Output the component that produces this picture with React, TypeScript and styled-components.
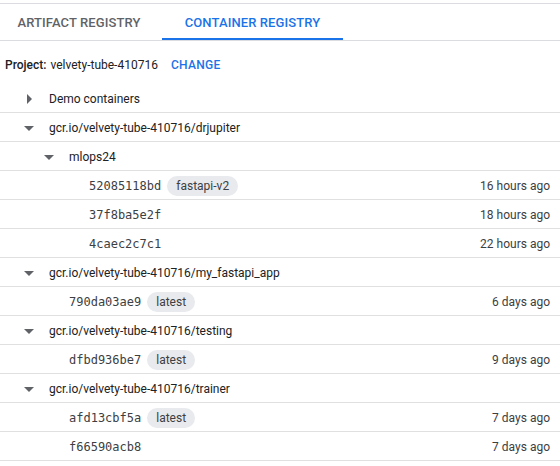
import React from "react";
import styled, { createGlobalStyle } from "styled-components";

const GlobalStyle = createGlobalStyle`
  body {
    margin: 0;
    background: #fff;
    font-family: Roboto, "Liberation Sans", Arial, sans-serif;
    color: #202124;
  }
`;

const Page = styled.div`
  width: 560px;
  padding-top: 3px;
`;

const TabBar = styled.div`
  display: flex;
  gap: 4px;
  border-top: 1px solid #dadce0;
  border-bottom: 1px solid #dadce0;
`;

const Tab = styled.div<{ $active?: boolean; $width: number }>`
  box-sizing: border-box;
  width: ${(p) => p.$width}px;
  height: 36px;
  display: flex;
  align-items: center;
  justify-content: center;
  font-size: 13px;
  font-weight: 500;
  letter-spacing: 0.1px;
  color: ${(p) => (p.$active ? "#1a73e8" : "#5f6368")};
  border-bottom: 2px solid ${(p) => (p.$active ? "#1a73e8" : "transparent")};
  padding-top: 2px;
`;

const ProjectLine = styled.div`
  display: flex;
  align-items: center;
  height: 43px;
  padding: 4px 5px 0;
  font-size: 12px;
  line-height: 16px;
  box-sizing: border-box;
`;

const Label = styled.span`
  font-weight: 500;
  margin-right: 4px;
`;

const ChangeLink = styled.span`
  color: #1a73e8;
  font-weight: 500;
  margin-left: 13px;
  letter-spacing: 0.3px;
`;

const Row = styled.div<{ $depth: number }>`
  box-sizing: border-box;
  display: flex;
  align-items: center;
  height: 29px;
  padding-top: 2px;
  border-bottom: 1px solid #e0e0e0;
  padding-left: ${(p) => 17 + p.$depth * 20}px;
  padding-right: 10px;
  font-size: 12px;
`;

const Toggle = styled.span`
  width: 24px;
  height: 24px;
  display: flex;
  align-items: center;
  justify-content: center;
  color: #5f6368;
  margin-right: 8px;
  flex-shrink: 0;
`;

const Name = styled.span`
  color: #202124;
`;

const Digest = styled.span`
  font-family: "DejaVu Sans Mono", "Liberation Mono", monospace;
  font-size: 12px;
  color: #3c4043;
`;

const Chip = styled.span`
  margin-left: 6px;
  height: 20px;
  line-height: 20px;
  padding: 0 9px;
  border-radius: 10px;
  background: #e8eaed;
  color: #3c4043;
  font-size: 12px;
`;

const Time = styled.span`
  margin-left: auto;
  color: #3c4043;
`;

const Caret = ({ open }: { open: boolean }) => (
  <svg width="24" height="24" viewBox="0 0 24 24">
    {open ? (
      <path d="M7 10l5 5 5-5z" fill="currentColor" />
    ) : (
      <path d="M10 17l5-5-5-5z" fill="currentColor" />
    )}
  </svg>
);

type Item =
  | { kind: "folder"; depth: number; name: string; open: boolean }
  | { kind: "image"; depth: number; digest: string; tag?: string; time: string };

const items: Item[] = [
  { kind: "folder", depth: 0, name: "Demo containers", open: false },
  { kind: "folder", depth: 0, name: "gcr.io/velvety-tube-410716/drjupiter", open: true },
  { kind: "folder", depth: 1, name: "mlops24", open: true },
  { kind: "image", depth: 2, digest: "52085118bd", tag: "fastapi-v2", time: "16 hours ago" },
  { kind: "image", depth: 2, digest: "37f8ba5e2f", time: "18 hours ago" },
  { kind: "image", depth: 2, digest: "4caec2c7c1", time: "22 hours ago" },
  { kind: "folder", depth: 0, name: "gcr.io/velvety-tube-410716/my_fastapi_app", open: true },
  { kind: "image", depth: 1, digest: "790da03ae9", tag: "latest", time: "6 days ago" },
  { kind: "folder", depth: 0, name: "gcr.io/velvety-tube-410716/testing", open: true },
  { kind: "image", depth: 1, digest: "dfbd936be7", tag: "latest", time: "9 days ago" },
  { kind: "folder", depth: 0, name: "gcr.io/velvety-tube-410716/trainer", open: true },
  { kind: "image", depth: 1, digest: "afd13cbf5a", tag: "latest", time: "7 days ago" },
  { kind: "image", depth: 1, digest: "f66590acb8", time: "7 days ago" },
];

export default function App() {
  return (
    <Page>
      <GlobalStyle />
      <TabBar>
        <Tab $width={158}>ARTIFACT REGISTRY</Tab>
        <Tab $width={181} $active>
          CONTAINER REGISTRY
        </Tab>
      </TabBar>
      <ProjectLine>
        <Label>Project:</Label>
        <span>velvety-tube-410716</span>
        <ChangeLink>CHANGE</ChangeLink>
      </ProjectLine>
      {items.map((it, i) =>
        it.kind === "folder" ? (
          <Row key={i} $depth={it.depth}>
            <Toggle>
              <Caret open={it.open} />
            </Toggle>
            <Name>{it.name}</Name>
          </Row>
        ) : (
          <Row key={i} $depth={it.depth}>
            <Toggle />
            <Digest>{it.digest}</Digest>
            {it.tag && <Chip>{it.tag}</Chip>}
            <Time>{it.time}</Time>
          </Row>
        )
      )}
    </Page>
  );
}
